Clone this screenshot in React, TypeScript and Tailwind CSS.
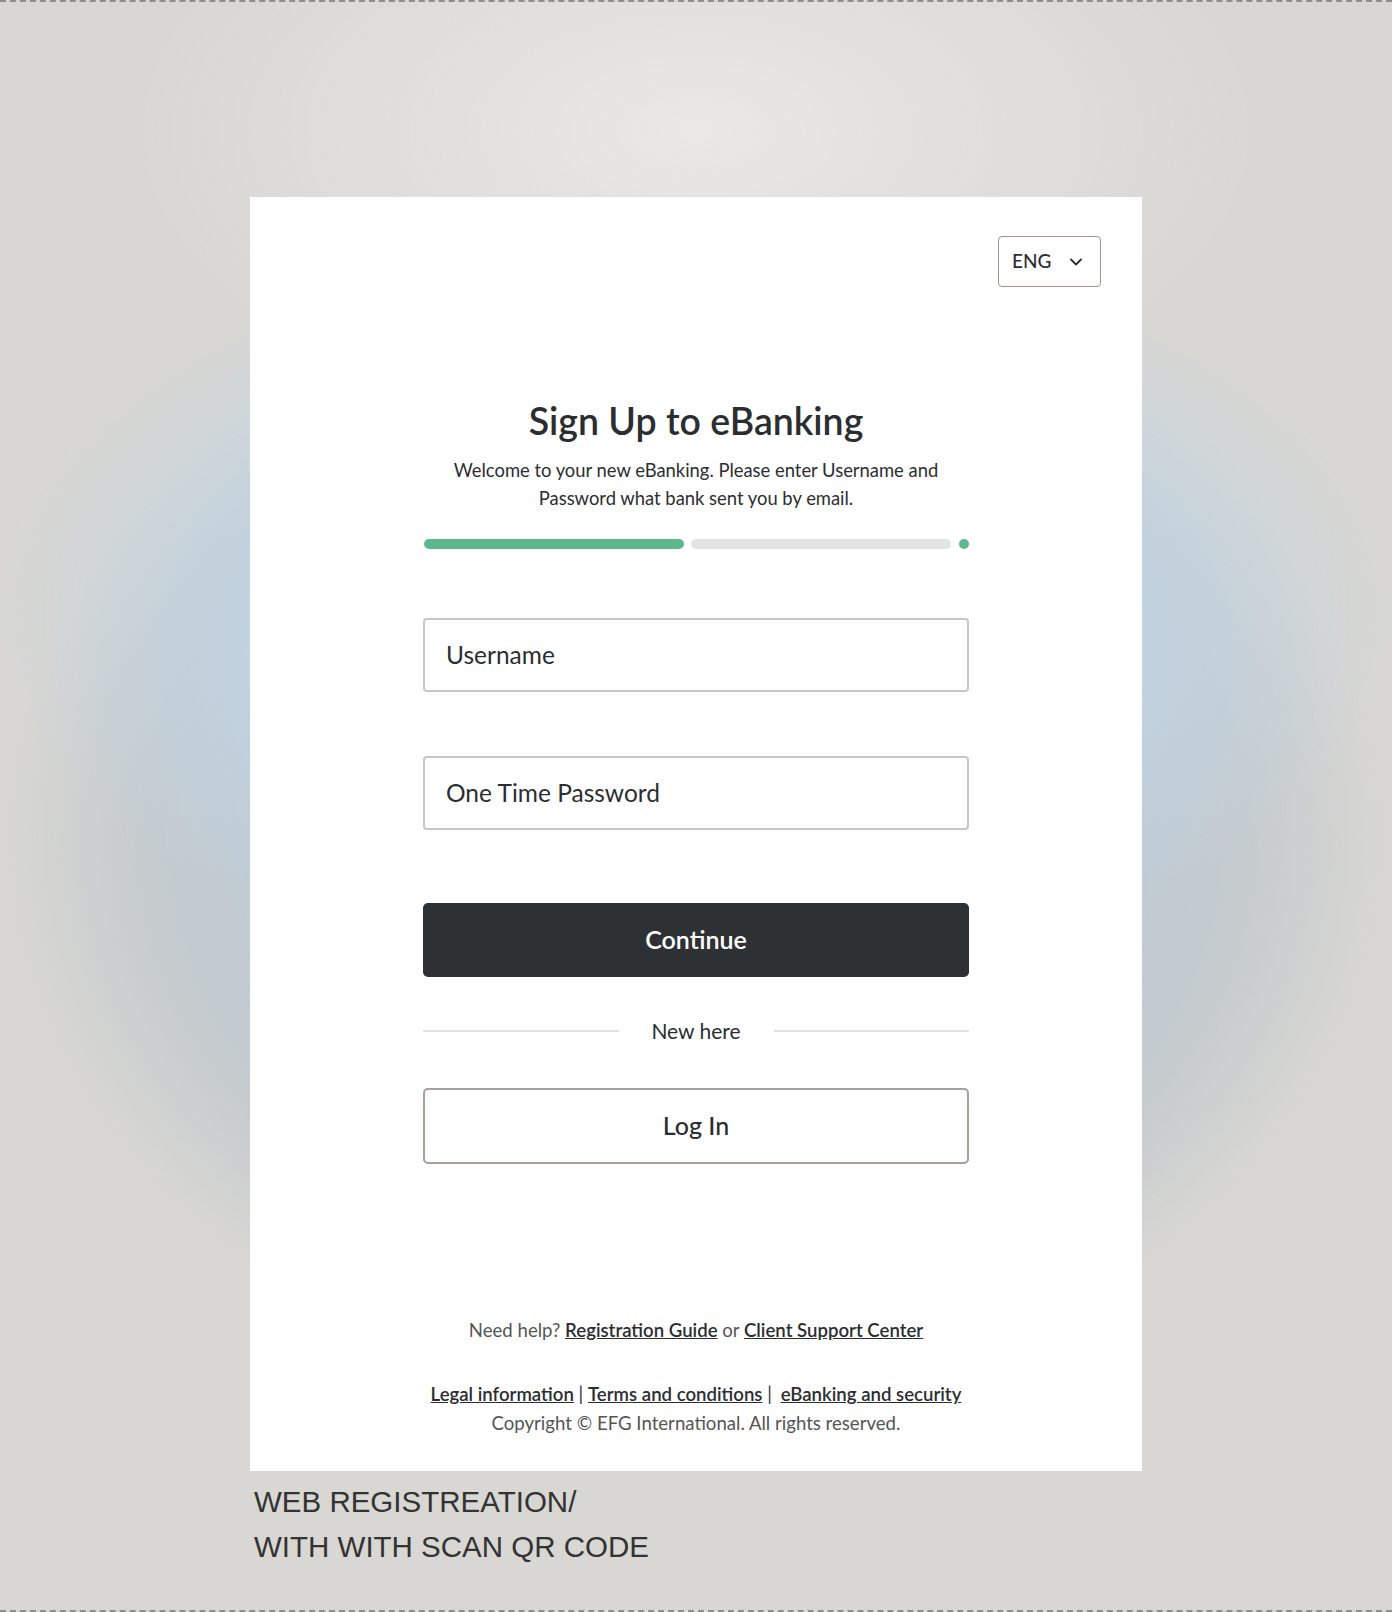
import { ChevronDown } from "lucide-react";

const FONT = "font-['Lato','Noto_Sans',sans-serif]";

function LangSelect() {
  return (
    <button className="flex h-[51px] w-[103px] items-center justify-between rounded-[4px] border border-[#9f958d] bg-white pl-[13px] pr-[14px] text-[19px] font-medium text-[#2b2e31]">
      <span>ENG</span>
      <ChevronDown className="h-[20px] w-[20px] text-[#2b2e31]" strokeWidth={2.2} />
    </button>
  );
}

function Progress() {
  return (
    <div className="mt-[27px] flex items-center gap-[7px]">
      <div className="h-[10px] w-[260px] rounded-full bg-[#5cb98d]" />
      <div className="h-[10px] w-[260px] rounded-full bg-[#e1e4e5]" />
      <div className="ml-[1px] h-[10px] w-[10px] rounded-full bg-[#5cb98d]" />
    </div>
  );
}

function TextField({ label }: { label: string }) {
  return (
    <div className="flex h-[74px] w-full items-center rounded-[4px] border-2 border-[#c4c6c7] bg-white px-[21px]">
      <span className="text-[24.5px] text-[#2b2e31]">{label}</span>
    </div>
  );
}

export default function App() {
  return (
    <div
      className={`flex h-[1612px] w-full flex-col border-y-2 border-dashed border-[#8e8e8c] bg-[#d8d7d3] bg-[radial-gradient(ellipse_560px_300px_at_50%_8%,rgba(234,233,229,0.95),rgba(234,233,229,0)_100%),radial-gradient(ellipse_700px_380px_at_50%_38%,rgba(186,212,234,0.95)_0%,rgba(192,213,230,0.8)_60%,rgba(216,215,211,0)_100%),radial-gradient(ellipse_690px_560px_at_50%_52%,#b9cfe1_0%,#bccad6_55%,rgba(190,198,204,0.7)_80%,rgba(216,215,211,0)_100%)] ${FONT}`}
    >
      <div className="mx-auto mt-[195px] flex h-[1274px] w-[892px] flex-col items-center bg-white">
        <div className="flex w-full justify-end pr-[41px] pt-[39px]">
          <LangSelect />
        </div>

        <div className="flex w-[546px] flex-col items-center">
          <h1 className="mt-[112px] text-[37.5px] font-semibold leading-[44px] text-[#2b2e31]">
            Sign Up to eBanking
          </h1>
          <p className="mt-[13px] text-center text-[18.4px] leading-[28px] text-[#2b2e31]">
            Welcome to your new eBanking. Please enter Username and
            <br />
            Password what bank sent you by email.
          </p>

          <Progress />

          <div className="mt-[69px] w-full">
            <TextField label="Username" />
          </div>
          <div className="mt-[64px] w-full">
            <TextField label="One Time Password" />
          </div>

          <button className="mt-[73px] flex h-[74px] w-full items-center justify-center rounded-[5px] bg-[#2e3134] text-[25px] font-semibold text-white">
            Continue
          </button>

          <div className="mt-[42px] flex h-[24px] w-full items-center">
            <div className="h-[2px] flex-1 bg-[#dfe1e2]" />
            <span className="w-[155px] text-center text-[21px] text-[#2b2e31]">New here</span>
            <div className="h-[2px] flex-1 bg-[#dfe1e2]" />
          </div>

          <button className="mt-[45px] flex h-[76px] w-full items-center justify-center rounded-[5px] border-2 border-[#a99f97] bg-white text-[25px] font-medium text-[#2b2e31]">
            Log In
          </button>

          <p className="mt-[154px] text-[18.6px] leading-[24px] text-[#555]">
            Need help?{" "}
            <a className="font-semibold text-[#2b2e31] underline">Registration Guide</a> or{" "}
            <a className="font-semibold text-[#2b2e31] underline">Client Support Center</a>
          </p>

          <div className="mt-[38px] flex flex-col items-center text-[18.6px] leading-[29px]">
            <p className="text-[#2b2e31]">
              <a className="font-semibold underline">Legal information</a> |{" "}
              <a className="font-semibold underline">Terms and conditions</a> |{"  "}
              <a className="ml-[4px] font-semibold underline">eBanking and security</a>
            </p>
            <p className="text-[#555]">Copyright © EFG International. All rights reserved.</p>
          </div>
        </div>
      </div>

      <div className="mx-auto w-[892px] pl-[4px] pt-[8px] font-['Liberation_Sans',Arial,sans-serif] text-[29.5px] leading-[45px] text-[#333]">
        <p>WEB REGISTREATION/</p>
        <p>WITH WITH SCAN QR CODE</p>
      </div>
    </div>
  );
}
